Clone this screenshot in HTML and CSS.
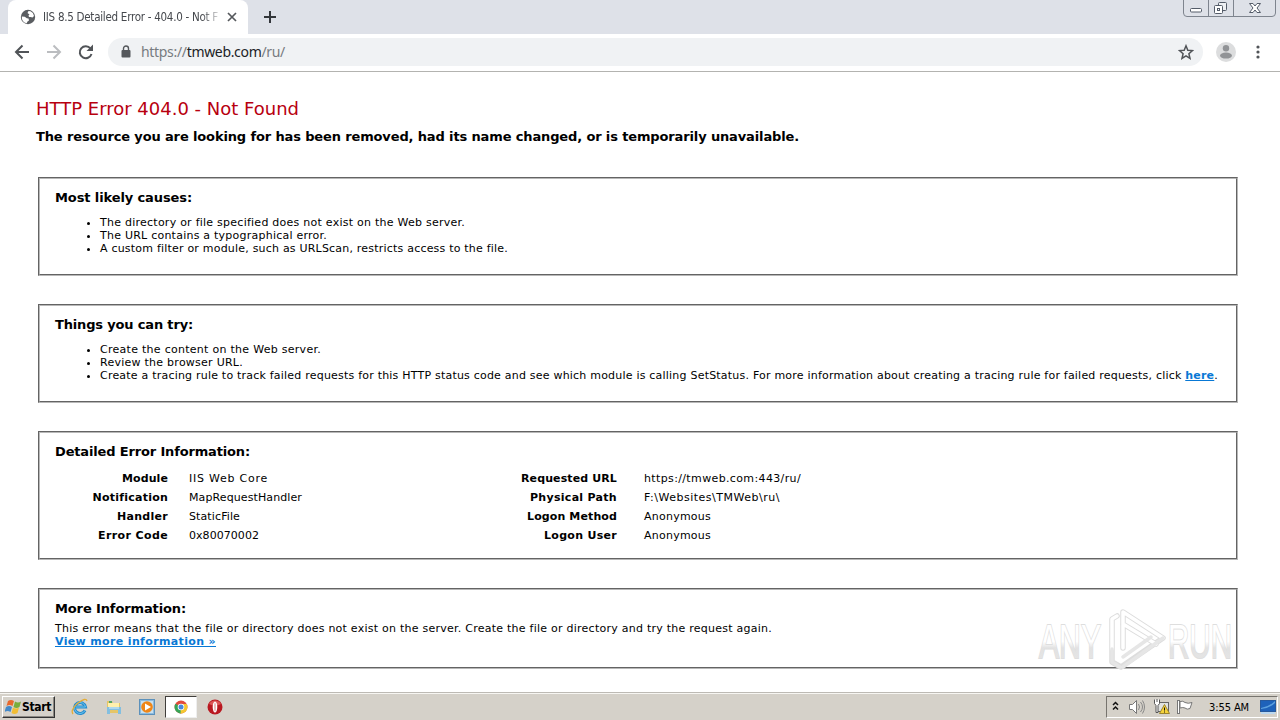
FILE: index.html
```html
<!DOCTYPE html>
<html lang="en">
<head>
<meta charset="utf-8">
<title>IIS 8.5 Detailed Error - 404.0 - Not Found</title>
<link rel="stylesheet" href="styles.css">
</head>
<body>
<div class="screen">
  <header class="tabstrip">
    <div class="tab">
      <svg class="globe" width="16" height="16" viewBox="0 0 16 16"><circle cx="8" cy="8" r="7.200" fill="#5a5d61"/><path d="M1.800 7.500l3 .2 2 1.500 1.700.3.500 2-1.500 1-.8 1.800Q1.500 13 1.800 7.500zM8.500 2l2 .2Q13.500 3.500 14 7l-1.500 1.500-2-.5-1.500 0-.5-1.500 1-1-2-1.500z" fill="#fff"/></svg>
      <span class="tab-title"><span data-width="175">IIS 8.5 Detailed Error - 404.0 - Not F</span></span>
      <svg class="tab-close" width="10" height="10" viewBox="0 0 10 10"><path d="M1 1l8 8M9 1l-8 8" stroke="#55585c" stroke-width="1.700"/></svg>
    </div>
    <svg class="new-tab" width="12" height="12" viewBox="0 0 12 12"><path d="M6 0v12M0 6h12" stroke="#33363b" stroke-width="2"/></svg>
    <svg class="window-buttons" width="94" height="18" viewBox="0 0 94 18" fill="none"><path d="M.5 0v13q0 3.500 3.500 3.500h85q3.500 0 3.500-3.500V0M25.500 0v16M50.500 0v16" stroke="#7e848e"/><g stroke="#545c69"><rect x="7.500" y="8.500" width="11" height="3.500" rx="1" fill="#fff"/><rect x="35.500" y="2.500" width="8" height="8" rx="1" fill="#eef0f3"/><rect x="31.500" y="5.500" width="8" height="8" rx="1" fill="#fff"/><rect x="34.500" y="8.500" width="2" height="2"/><path d="M66.500 3.500h3.500l2 2.500 2-2.500h3.500l-3.500 4.500 3.500 4.500H74l-2-2.500-2 2.500h-3.500L70 8z" fill="#fff"/></g></svg>
  </header>

  <nav class="toolbar">
    <svg class="nav-icons" width="80" height="18" viewBox="0 0 80 18" fill="none" stroke-width="2"><path d="M15 9H2M8.500 2.500L2 9l6.500 6.500" stroke="#515458"/><path d="M33 9h13M39.500 2.500L46 9l-6.500 6.500" stroke="#bbbdc0"/><path d="M76.500 5.500A6 6 0 1 0 77.500 11" stroke="#515458"/><path d="M79 1.500V8h-6.500z" fill="#515458"/></svg>
    <div class="omnibox">
      <svg class="lock" width="10" height="13" viewBox="0 0 10 13"><path d="M2.500 6V3.500a2.500 2.500 0 0 1 5 0V6" fill="none" stroke="#55585c" stroke-width="1.400"/><rect x=".5" y="5" width="9" height="7.500" rx="1" fill="#55585c"/></svg>
      <span class="address"><span data-width="144">https://<b>tmweb.com</b>/ru/</span></span>
      <svg class="star" width="16" height="16" viewBox="0 0 16 16"><path d="M8 1.800l1.800 4.400 4.700.4-3.600 3.100 1.100 4.600L8 11.800l-4 2.500 1.100-4.600L1.500 6.600l4.700-.4z" fill="none" stroke="#515458" stroke-width="1.500"/></svg>
    </div>
    <svg class="avatar" width="20" height="20" viewBox="0 0 20 20"><circle cx="10" cy="10" r="10" fill="#dcddde"/><circle cx="10" cy="6.200" r="3.200" fill="#919396"/><ellipse cx="10" cy="13.600" rx="6" ry="3" fill="#919396"/></svg>
    <svg class="menu-dots" width="4" height="14" viewBox="0 0 4 14" fill="#515458"><circle cx="2" cy="2" r="1.600"/><circle cx="2" cy="7" r="1.600"/><circle cx="2" cy="12" r="1.600"/></svg>
  </nav>

  <main class="page">
    <h1><span data-width="263">HTTP Error 404.0 - Not Found</span></h1>
    <h2><span data-width="763">The resource you are looking for has been removed, had its name changed, or is temporarily unavailable.</span></h2>

    <section class="panel causes">
      <h3><span data-width="137">Most likely causes:</span></h3>
      <ul>
        <li><span data-width="365">The directory or file specified does not exist on the Web server.</span></li>
        <li><span data-width="227">The URL contains a typographical error.</span></li>
        <li><span data-width="408">A custom filter or module, such as URLScan, restricts access to the file.</span></li>
      </ul>
    </section>

    <section class="panel tries">
      <h3><span data-width="138">Things you can try:</span></h3>
      <ul>
        <li><span data-width="221">Create the content on the Web server.</span></li>
        <li><span data-width="143">Review the browser URL.</span></li>
        <li><span data-width="1118">Create a tracing rule to track failed requests for this HTTP status code and see which module is calling SetStatus. For more information about creating a tracing rule for failed requests, click <a>here</a>.</span></li>
      </ul>
    </section>

    <section class="panel details">
      <h3><span data-width="195">Detailed Error Information:</span></h3>
      <div class="facts">
        <b><span data-width="46">Module</span></b><span><span data-width="79">IIS Web Core</span></span><b><span data-width="96">Requested URL</span></b><span><span data-width="157">https://tmweb.com:443/ru/</span></span>
        <b><span data-width="75">Notification</span></b><span><span data-width="113">MapRequestHandler</span></span><b><span data-width="87">Physical Path</span></b><span><span data-width="136">F:\Websites\TMWeb\ru\</span></span>
        <b><span data-width="51">Handler</span></b><span><span data-width="51">StaticFile</span></span><b><span data-width="90">Logon Method</span></b><span><span data-width="67">Anonymous</span></span>
        <b><span data-width="70">Error Code</span></b><span><span data-width="70">0x80070002</span></span><b><span data-width="73">Logon User</span></b><span><span data-width="67">Anonymous</span></span>
      </div>
    </section>

    <section class="panel more">
      <h3><span data-width="131">More Information:</span></h3>
      <p><span data-width="717">This error means that the file or directory does not exist on the server. Create the file or directory and try the request again.</span></p>
      <p><a data-width="161">View more information »</a></p>
    </section>

    <svg class="watermark" width="215" height="72" viewBox="0 0 215 72">
      <defs><linearGradient id="fade" x1="0" y1="0" x2="0" y2="1"><stop offset="0" stop-color="#fff"/><stop offset=".5" stop-color="#fff"/><stop offset=".62" stop-color="#e2e2e2"/><stop offset="1" stop-color="#e6e6e6"/></linearGradient></defs>
      <text x="9" y="52" textLength="62" lengthAdjust="spacingAndGlyphs">ANY</text>
      <text x="138" y="52" textLength="64" lengthAdjust="spacingAndGlyphs">RUN</text>
      <g class="play" fill="none" stroke-linejoin="round" stroke-linecap="round"><path d="M93 42V6l40 26-42 29-9-5V13l5-3M93 18l33 20" stroke="#ddd" stroke-width="5.500"/><path d="M93 42V6l40 26M82 43V13l5-3M93 18l33 20" stroke="#fff" stroke-width="3.500"/><path d="M133 32L93 61M93 51l28-20M82 43v13l8 5" stroke="#e6e6e6" stroke-width="3.500"/></g>
    </svg>
  </main>

  <footer class="taskbar">
    <div class="start">
      <svg width="17" height="16" viewBox="0 0 17 16"><path d="M3 2q3-2 6 0L7.500 7q-3-2-6 0z" fill="#e8692d"/><path d="M10 2.500q3 2 6 0L14.500 8q-3 2-6 0z" fill="#79ad3c"/><path d="M1 8q3-2 6 0l-1.500 5q-3-2-6 0z" fill="#4389c9"/><path d="M8 8.500q3 2 6 0L12.500 14q-3 2-6 0z" fill="#f1bd33"/></svg>
      <span data-width="29">Start</span>
    </div>
    <svg class="ie" width="18" height="18" viewBox="0 0 18 18" fill="none"><path d="M14 12.500A5.500 5.500 0 1 1 14.500 9H5" stroke="#268bcd" stroke-width="3"/><path d="M14 12.500A5.500 5.500 0 1 1 14.500 9H5" stroke="#69c5ef"/><path d="M2 16Q-1 12 7 5q8-6 9-2" stroke="#e4ad38" stroke-width="1.300"/></svg>
    <svg class="folder" width="18" height="18" viewBox="0 0 18 18"><path d="M2 3h5l1 2h7v10H2z" fill="#e5c567"/><path d="M3 5h11v5H3z" fill="#fff0ac"/><path d="M4 3h3v2H4z" fill="#55a562"/><path d="M2 9h14v7h-3v-4H5v4H2z" fill="#83bfe0"/><path d="M4 10h10" stroke="#d8f0fa"/></svg>
    <svg class="media" width="17" height="17" viewBox="0 0 17 17"><rect x=".5" y=".5" width="15" height="15" fill="#8cbce0" stroke="#5c91bb"/><rect x="2" y="2" width="12" height="12" fill="#c9e0ef"/><circle cx="8" cy="8" r="5.800" fill="#ef8617"/><path d="M6 4.500L12 8l-6 3.500z" fill="#fff"/></svg>
    <div class="chrome-button">
      <svg width="14" height="14" viewBox="0 0 14 14"><circle cx="7" cy="7" r="6.500" fill="#e24b3c"/><path d="M7 7L1.400 3.800A6.500 6.500 0 0 0 7 13.500z" fill="#35a557"/><path d="M7 7h6.500A6.500 6.500 0 0 1 6.500 13.500z" fill="#f4c730"/><path d="M7 4h5.800l.7 3H9z" fill="#f4c730"/><circle cx="7" cy="7" r="3.300" fill="#fff"/><circle cx="7" cy="7" r="2.500" fill="#4788dc"/></svg>
    </div>
    <svg class="opera" width="16" height="16" viewBox="0 0 16 16"><circle cx="8" cy="8" r="7.500" fill="#b91820"/><path d="M2 5a7 7 0 0 1 12 0q-6 3-12 0z" fill="#dc5556"/><ellipse cx="8" cy="8" rx="2.300" ry="5.500" fill="#fff"/><ellipse cx="8" cy="8" rx=".6" ry="4.500" fill="#d88"/></svg>
    <div class="tray">
      <svg class="tray-icons" width="84" height="18" viewBox="0 0 84 18" fill="none"><path d="M2 7l2.500-2.500L7 7M2 11.500L4.500 9 7 11.500" stroke="#111" stroke-width="1.500"/><path d="M18.500 6.500h3l4-4v13l-4-4h-3z" fill="#fff" stroke="#777"/><path d="M27.500 6q2 3 0 6M29.500 4q4 5 0 10M31.500 2.500q4 6.500 0 13" stroke="#888"/><rect x="45.500" y="4.500" width="12" height="9" fill="#e0e2e1" stroke="#656565"/><path d="M43.500 1.500v4l1.500 2v7h2v-7l1.500-2v-4M46 1v3" fill="#fff" stroke="#555"/><path d="M53.500 6.500l5 9h-10z" fill="#f6d33b" stroke="#9c842d"/><path d="M53.500 9.500v3m0 1v1" stroke="#111"/><path d="M67.500 2v14" stroke="#777" stroke-width="3"/><path d="M67.500 3v12" stroke="#fff"/><path d="M69 3.500q3-1 5 1 3 1.500 7 0l-2 6q-3 1.500-5-.5-2-1-5 0z" fill="#fff" stroke="#777"/></svg>
      <time><span data-width="40">3:55 AM</span></time>
      <svg class="desktop" width="16" height="14" viewBox="0 0 16 14"><rect x=".5" y=".5" width="15" height="11" fill="#1e62ba" stroke="#27599c"/><path d="M1 8q8-1 14-7v2Q10 8 1 9z" fill="#5ca1df"/><path d="M1 13h14" stroke="#bcd8ef" stroke-width="2"/></svg>
    </div>
  </footer>
</div>
<script src="fit.js"></script>
</body>
</html>
```
FILE: styles.css
```css
* { box-sizing: border-box; }
body { margin: 0; background: #fff; color: #000; font: 11px/13px "DejaVu Sans", Verdana, sans-serif; }
svg { display: block; flex: none; }
[data-width] { display: inline-block; white-space: nowrap; }
.screen { width: 1280px; height: 720px; display: flex; flex-direction: column; overflow: hidden; }
.tabstrip { height: 34px; flex: none; display: flex; background: #dee1e8; }
.tab { width: 240px; height: 34px; margin-left: 8px; background: #fff; border-radius: 8px 8px 0 0; display: flex; align-items: center; padding-left: 12px; }
.tab-title { width: 176px; margin-left: 7px; overflow: hidden; font: 11.5px/16px "DejaVu Sans Condensed", Tahoma, sans-serif; color: #45484d; -webkit-mask-image: linear-gradient(90deg, #000 90%, rgba(0,0,0,.2)); }
.tab-close { margin-left: 8px; }
.new-tab { margin: 11px 0 0 16px; }
.window-buttons { margin-left: auto; margin-right: 3px; }
.toolbar { height: 38px; flex: none; display: flex; align-items: center; border-bottom: 1px solid #b3b3b0; padding: 0 0 2px 14px; }
.omnibox { display: flex; align-items: center; width: 1095px; height: 28px; margin-left: 14px; padding-left: 13px; border-radius: 14px; background: #f0f2f4; }
.address { margin-left: 10px; font: 14px/20px "Noto Sans", Tahoma, sans-serif; color: #777b80; }
.address b { font-weight: 400; color: #202326; }
.star { margin-left: auto; margin-right: 9px; }
.avatar { margin-left: 13px; }
.menu-dots { margin-left: 20px; }
.page { position: relative; height: 620px; flex: none; padding: 26px 43px 0 36px; }
h1, h2, h3, p, ul { margin: 0; padding: 0; }
h1 { font-weight: 400; font-size: 18px; line-height: 22px; color: #b8000f; }
h2 { font-size: 13px; line-height: 16px; margin-top: 9px; }
h3 { font-size: 13px; line-height: 16px; }
.panel { width: 1200px; margin: 28px 0 0 2px; border: 2px groove #b8b8b8; padding: 11px 15px 0; }
.causes { height: 99px; margin-top: 32px; }
.tries { height: 99px; }
.details { height: 129px; }
.more { height: 81px; }
ul { padding-left: 45px; margin-top: 10px; }
a { color: #0878d5; font-weight: 700; text-decoration: underline; }
.facts { display: grid; grid-template-columns: 113px 328px 121px 1fr; grid-auto-rows: 19px; margin-top: 11px; line-height: 15px; }
.facts > b { text-align: right; }
.facts > span { padding-left: 21px; }
.facts > span:nth-child(4n) { padding-left: 27px; }
.more p:first-of-type { margin-top: 5px; }
.watermark { position: absolute; left: 1030px; top: 534px; }
.watermark text { font: 48px "Liberation Sans", Arial, sans-serif; fill: url(#fade); stroke: #dedede; stroke-width: 2px; paint-order: stroke; }
.taskbar { height: 28px; flex: none; display: flex; align-items: center; background: #d5d1c9; border-top: 1px solid #bdbab4; box-shadow: inset 0 1px #f7f6f2; padding: 1px 2px 0 1px; }
.start { width: 53px; height: 22px; display: flex; align-items: center; border: 1px solid; border-color: #fff #333 #333 #fff; box-shadow: inset -1px -1px #8b8882; padding-left: 2px; font: bold 12px "DejaVu Sans Condensed", "DejaVu Sans", sans-serif; }
.start { margin-left: 1px; }
.ie { margin-left: 16px; }
.folder { margin-left: 16px; }
.media { margin-left: 16px; }
.chrome-button { width: 32px; height: 22px; margin-left: 9px; background: #fff; border: 1px solid; border-color: #403e3b #eee #eee #403e3b; display: flex; align-items: center; justify-content: center; }
.opera { margin-left: 10px; }
.tray { margin-left: auto; width: 172px; height: 22px; border: 1px solid; border-color: #77746e #fff #fff #77746e; display: flex; align-items: center; padding-left: 4px; }
time { margin-left: 14px; font: 11px/15px "DejaVu Sans Condensed", Tahoma, sans-serif; }
.desktop { margin-left: 11px; }
```
FILE: fit.js
```js
// Track each label so that it fills the width set in its data attribute.
document.querySelectorAll('[data-width]').forEach((label) => {
  const target = Number(label.dataset.width);
  const natural = label.getBoundingClientRect().width;
  const letters = label.textContent.length;
  label.style.letterSpacing = (target - natural) / letters + 'px';
});
```
